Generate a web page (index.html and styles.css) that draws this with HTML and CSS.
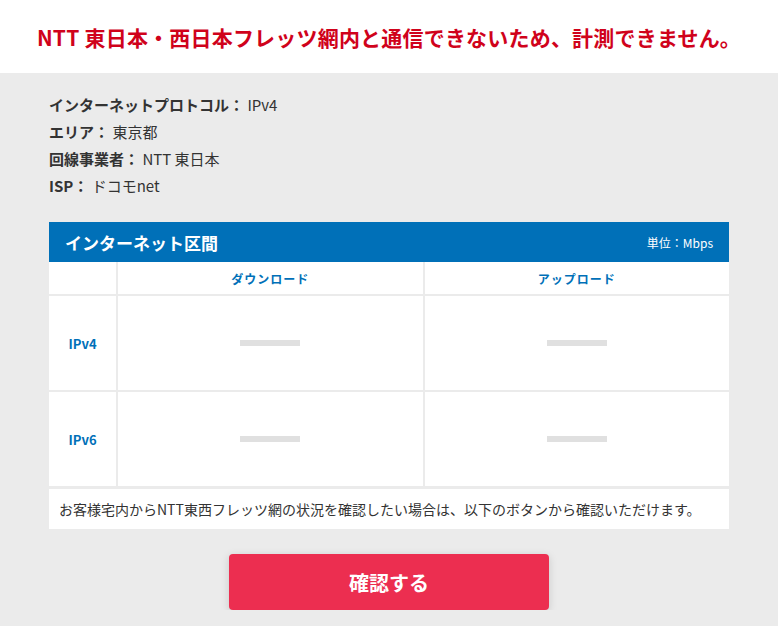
FILE: index.html
```html
<!DOCTYPE html>
<html lang="ja">
<head>
  <meta charset="UTF-8">
  <meta name="viewport" content="width=device-width, initial-scale=1">
  <title>計測結果</title>
  <link rel="stylesheet" href="styles.css">
</head>
<body>
  <header class="notice">
    <h1>NTT 東日本・西日本フレッツ網内と通信できないため、計測できません。</h1>
  </header>
  <main class="content">
    <ul class="info">
      <li><b>インターネットプロトコル：</b> IPv4</li>
      <li><b>エリア：</b> 東京都</li>
      <li><b>回線事業者：</b> NTT 東日本</li>
      <li><b>ISP：</b> ドコモnet</li>
    </ul>

    <section class="result">
      <div class="result-head">
        <h2>インターネット区間</h2>
        <span class="unit">単位：Mbps</span>
      </div>
      <div class="grid">
        <div class="cell"></div>
        <div class="cell col-title">ダウンロード</div>
        <div class="cell col-title">アップロード</div>

        <div class="cell row-title">IPv4</div>
        <div class="cell"><span class="dash"></span></div>
        <div class="cell"><span class="dash"></span></div>

        <div class="cell row-title">IPv6</div>
        <div class="cell"><span class="dash"></span></div>
        <div class="cell"><span class="dash"></span></div>
      </div>
      <p class="note">お客様宅内からNTT東西フレッツ網の状況を確認したい場合は、以下のボタンから確認いただけます。</p>
    </section>

    <div class="actions">
      <button class="btn" type="button">確認する</button>
    </div>
  </main>
</body>
</html>
```

FILE: styles.css
```css
body { margin: 0; background: #ebebeb; color: #333; font-family: "Noto Sans CJK JP", "Noto Sans", sans-serif; }

.notice { background: #fff; height: 73px; display: flex; align-items: center; justify-content: center; }
.notice h1 { margin: 0; font-size: 21px; font-weight: 700; color: #d0021b; letter-spacing: 0.2px; }

.content { padding: 18px 49px 0; }

.info { list-style: none; margin: 0; padding: 0; font-size: 15px; line-height: 27px; }
.info b { font-weight: 700; }

.result { margin-top: 23px; }
.result-head { background: #0070b8; color: #fff; height: 40px; display: flex; align-items: center; justify-content: space-between; padding: 0 16px; }
.result-head h2 { margin: 0; font-size: 17px; font-weight: 700; }
.unit { font-size: 12px; }

.grid { display: grid; grid-template-columns: 67px 1fr 1fr; grid-template-rows: 32px 94px 94px; gap: 2px; }
.cell { background: #fff; display: flex; align-items: center; justify-content: center; }
.col-title { font-size: 12px; font-weight: 700; color: #0070b8; letter-spacing: 1px; }
.row-title { font-size: 13px; font-weight: 700; color: #0070b8; }
.dash { width: 60px; height: 6px; background: #e0e0e0; }

.note { margin: 3px 0 0; background: #fff; height: 40px; display: flex; align-items: center; padding: 0 10px; font-size: 14px; }

.actions { display: flex; justify-content: center; padding-top: 25px; }
.btn { width: 320px; height: 56px; background: #ec2e50; color: #fff; border: none; border-radius: 4px; font-family: inherit; font-size: 20px; font-weight: 700; box-shadow: 0 2px 8px rgba(0,0,0,0.15); cursor: pointer; }
```
